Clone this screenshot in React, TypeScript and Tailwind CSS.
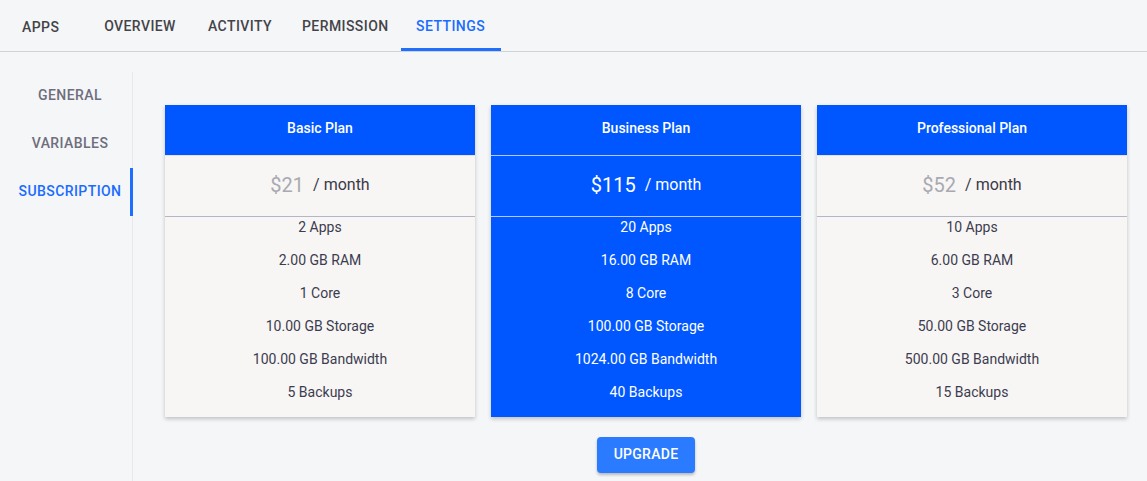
import React from 'react';

type Plan = {
  name: string;
  price: string;
  features: string[];
  featured?: boolean;
};

const plans: Plan[] = [
  {
    name: 'Basic Plan',
    price: '$21',
    features: ['2 Apps', '2.00 GB RAM', '1 Core', '10.00 GB Storage', '100.00 GB Bandwidth', '5 Backups'],
  },
  {
    name: 'Business Plan',
    price: '$115',
    featured: true,
    features: ['20 Apps', '16.00 GB RAM', '8 Core', '100.00 GB Storage', '1024.00 GB Bandwidth', '40 Backups'],
  },
  {
    name: 'Professional Plan',
    price: '$52',
    features: ['10 Apps', '6.00 GB RAM', '3 Core', '50.00 GB Storage', '500.00 GB Bandwidth', '15 Backups'],
  },
];

const tabs = ['OVERVIEW', 'ACTIVITY', 'PERMISSION', 'SETTINGS'];
const sideItems = ['GENERAL', 'VARIABLES', 'SUBSCRIPTION'];

function PlanCard({ plan }: { plan: Plan }) {
  const hot = plan.featured;
  return (
    <div
      className={`w-[310px] shadow-[0_2px_4px_rgba(0,0,0,0.22)] ${
        hot ? 'bg-[#0057ff] text-white' : 'bg-[#f7f6f4] text-[#3c3c50]'
      }`}
    >
      {/* header */}
      <div className="h-[50px] pb-[3px] bg-[#0057ff] flex items-center justify-center text-[14px] font-medium text-white">
        {plan.name}
      </div>
      {/* price */}
      <div
        className={`h-[61px] pb-[2px] flex items-center justify-center gap-[9px] border-t ${
          hot ? 'border-[#b4c6ff]' : 'border-[#e2e2e6]'
        }`}
      >
        <span className={`text-[20px] ${hot ? 'text-white' : 'text-[#a9a9b2]'}`}>{plan.price}</span>
        <span className={`text-[16px] ${hot ? 'text-white' : 'text-[#3a3a48]'}`}>/ month</span>
      </div>
      {/* features */}
      <ul className={`border-t pb-[2px] ${hot ? 'border-[#b4c6ff]' : 'border-[#b3b6c8]'}`}>
        {plan.features.map((f) => (
          <li key={f} className="text-center text-[14px] leading-[20px] pb-[13px]">
            {f}
          </li>
        ))}
      </ul>
    </div>
  );
}

export default function App() {
  return (
    <div
      className="w-[1147px] h-[481px] bg-[#f5f6f8] overflow-hidden flex flex-col"
      style={{ fontFamily: 'Roboto, "Liberation Sans", sans-serif' }}
    >
      {/* Top tabs */}
      <div className="h-[52px] flex-shrink-0 flex items-stretch border-b border-[#d2d2d6] text-[14px] font-medium tracking-[0.03em]">
        <div className="w-[90px] pl-[22px] pt-[4px] flex items-center text-[#444448]">APPS</div>
        {tabs.map((t) => {
          const active = t === 'SETTINGS';
          return (
            <div
              key={t}
              className={`min-w-[100px] px-[12px] pt-[4px] flex items-center justify-center border-b-[3px] ${
                active ? 'text-[#1a6cff] border-[#1f6fff]' : 'text-[#444448] border-transparent'
              }`}
            >
              {t}
            </div>
          );
        })}
      </div>

      <div className="flex flex-1 min-h-0 pt-[20px]">
        {/* Side nav */}
        <div className="w-[133px] flex-shrink-0 border-r border-[#e8e8ea] text-[14px] font-medium tracking-[0.03em]">
          {sideItems.map((s) => {
            const active = s === 'SUBSCRIPTION';
            return (
              <div
                key={s}
                className={`h-[48px] pl-[10px] pb-[2px] flex items-center justify-center border-r-[3px] -mr-px ${
                  active ? 'text-[#1a6cff] border-[#1f6fff]' : 'text-[#6e6e7c] border-transparent'
                }`}
              >
                {s}
              </div>
            );
          })}
        </div>

        {/* Plans */}
        <div className="flex-1 pl-[32px] pr-[20px] pt-[33px] flex flex-col items-center">
          <div className="flex gap-[16px]">
            {plans.map((p) => (
              <PlanCard key={p.name} plan={p} />
            ))}
          </div>
          <button className="mt-[20px] w-[98px] h-[36px] pb-[2px] rounded-[4px] bg-[#2a7bff] text-white text-[14px] font-medium tracking-[0.02em] shadow-[0_2px_3px_rgba(0,0,0,0.25)]">
            UPGRADE
          </button>
        </div>
      </div>
    </div>
  );
}
